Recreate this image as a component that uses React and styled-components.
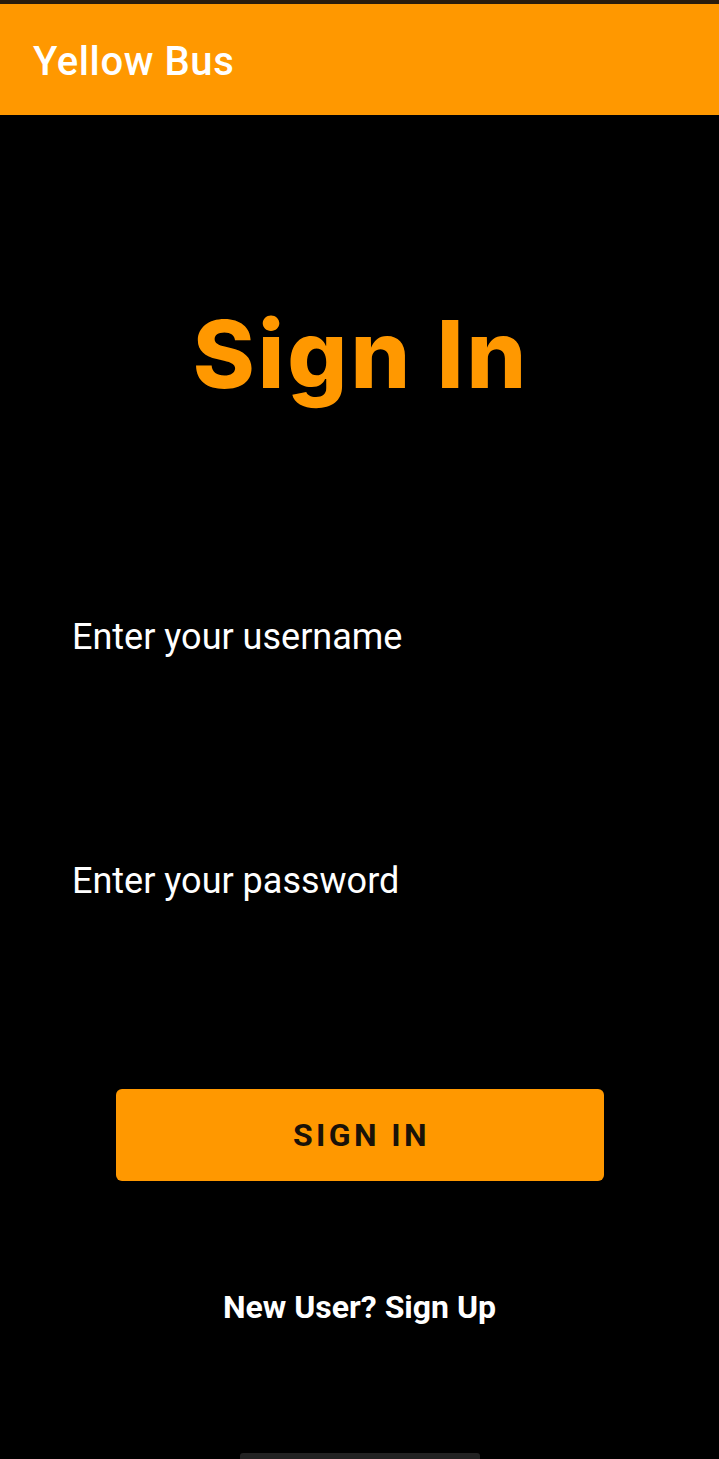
import React from "react";
import styled, { createGlobalStyle } from "styled-components";

const Global = createGlobalStyle`
  html, body { margin: 0; padding: 0; background: #000; }
  body { font-family: Roboto, "Liberation Sans", sans-serif; }
`;

const Screen = styled.div`
  width: 719px;
  height: 1459px;
  background: #000;
  display: flex;
  flex-direction: column;
  border-top: 4px solid #2a1c0c;
  box-sizing: border-box;
  overflow: hidden;
`;

const AppBar = styled.header`
  height: 111px;
  background: #ff9800;
  display: flex;
  align-items: center;
  padding: 4px 0 0 33px;
  box-sizing: border-box;
`;

const AppTitle = styled.h1`
  margin: 0;
  color: #fff;
  font-family: Roboto, sans-serif;
  font-weight: 500;
  font-size: 40px;
  letter-spacing: 0.6px;
`;

const Body = styled.main`
  flex: 1;
  display: flex;
  flex-direction: column;
  align-items: center;
`;

const Heading = styled.h2`
  margin: 189px 0 0 0;
  padding-left: 3px;
  color: #ff9800;
  font-family: Inter, sans-serif;
  font-weight: 800;
  font-size: 94px;
  line-height: 100px;
  letter-spacing: 3px;
`;

const Field = styled.div`
  align-self: stretch;
  padding-left: 72px;
  margin-top: ${(p) => p.$top}px;
  color: #fff;
  font-family: Roboto, sans-serif;
  font-size: 36px;
  line-height: 44px;
`;

const Button = styled.button`
  margin-top: 186px;
  width: 488px;
  height: 92px;
  border: none;
  border-radius: 6px;
  background: #ff9800;
  color: #1a1208;
  font-family: Roboto, sans-serif;
  font-weight: 700;
  font-size: 32px;
  letter-spacing: 3.4px;
  display: flex;
  align-items: center;
  justify-content: center;
  padding: 0 0 0 4px;
`;

const Link = styled.div`
  margin-top: 106px;
  color: #fff;
  font-family: Roboto, sans-serif;
  font-weight: 700;
  font-size: 32px;
  line-height: 40px;
`;

const Spacer = styled.div`
  flex: 1;
`;

const NavHandle = styled.div`
  width: 240px;
  height: 6px;
  background: #222;
  border-radius: 3px 3px 0 0;
`;

export default function App() {
  return (
    <>
      <Global />
      <Screen>
        <AppBar>
          <AppTitle>Yellow Bus</AppTitle>
        </AppBar>
        <Body>
          <Heading>Sign In</Heading>
          <Field $top={211}>Enter your username</Field>
          <Field $top={200}>Enter your password</Field>
          <Button>SIGN IN</Button>
          <Link>New User? Sign Up</Link>
          <Spacer />
          <NavHandle />
        </Body>
      </Screen>
    </>
  );
}
